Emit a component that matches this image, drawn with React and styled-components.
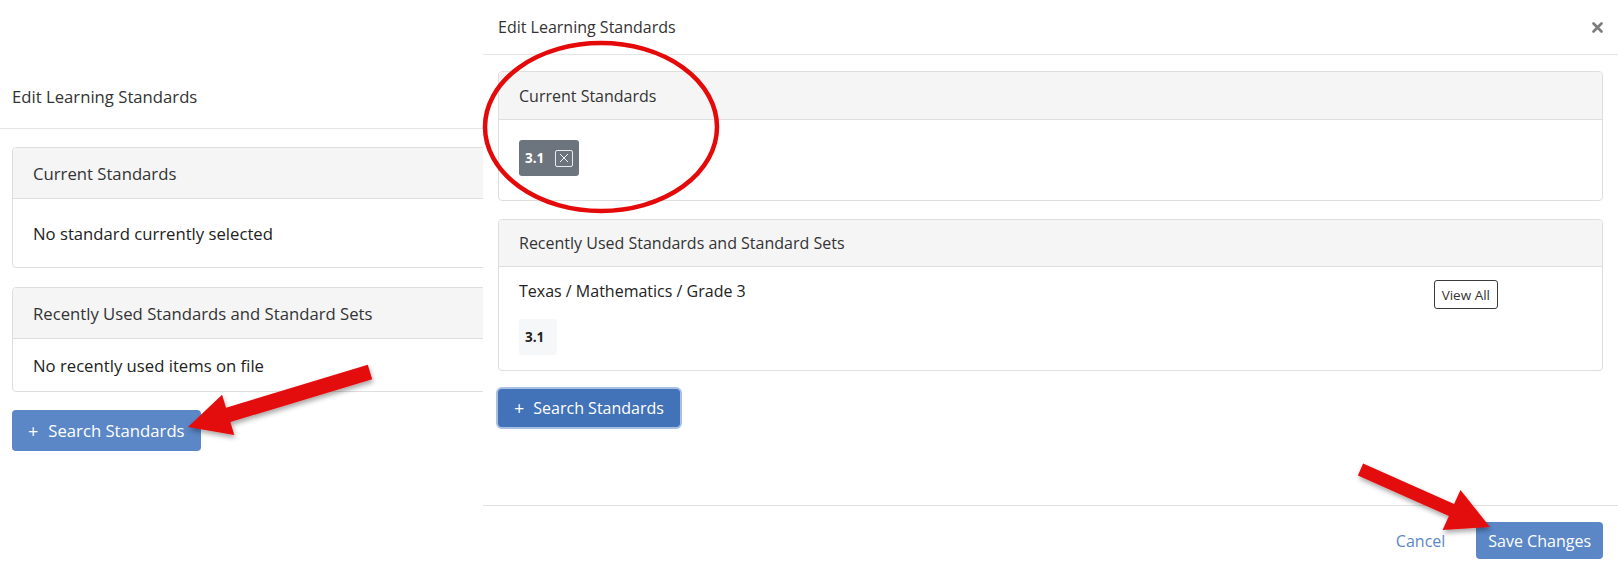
import React from 'react';
import styled, { createGlobalStyle } from 'styled-components';

const Global = createGlobalStyle`
  html, body { margin: 0; padding: 0; background: #fff; }
  * { box-sizing: border-box; }
`

const Page = styled.div`
  position: relative;
  width: 1618px;
  height: 575px;
  display: flex;
  overflow: hidden;
  background: #fff;
  font-family: "Open Sans", "Noto Sans", sans-serif;
  color: #333;
`

// left screenshot (slightly bigger scale)
const LeftPane = styled.div`
  flex: none;
  width: 483px;
  height: 100%;
  overflow: hidden;
`

const LeftInner = styled.div`
  width: 1100px;
`

const LeftHeader = styled.div`
  padding: 85px 12px 19px;
  border-bottom: 1px solid #e5e5e5;
  font-size: 16.7px;
  line-height: 24px;
  color: #333;
`

const LeftBody = styled.div`
  padding: 18px 12px 0;
  display: flex;
  flex-direction: column;
  gap: 19px;
`

const Card = styled.div`
  border: 1px solid #dedede;
  border-radius: 4px;
  background: #fff;
  overflow: hidden;
`

const CardHead = styled.div`
  height: ${p => p.$h}px;
  padding: 0 20px;
  display: flex;
  align-items: center;
  background: #f5f5f5;
  border-bottom: 1px solid #dedede;
  font-size: ${p => p.$fs}px;
  color: #333;
`

const EmptyBody = styled.div`
  height: ${p => p.$h}px;
  padding: 0 20px;
  display: flex;
  align-items: center;
  font-size: 16.7px;
  color: #222;
`

const ButtonRow = styled.div`
  display: flex;
  padding: 18px 12px 0;
`

const BlueButton = styled.button`
  align-self: ${p => p.$center ? 'center' : 'flex-start'};
  display: flex;
  align-items: center;
  gap: ${p => p.$gap}px;
  height: ${p => p.$h}px;
  padding: 0 ${p => p.$pad}px;
  border: none;
  border-radius: 4px;
  background: ${p => p.$bg};
  color: #fff;
  font-family: inherit;
  font-size: ${p => p.$fs}px;
  box-shadow: ${p => p.$focus ? '0 0 0 2px #a9c0e4' : 'none'};
`

const Plus = styled.span`
  font-size: 18px;
  font-weight: 400;
  line-height: 1;
`

// right screenshot (modal)
const RightPane = styled.div`
  flex: 1;
  height: 100%;
  display: flex;
  flex-direction: column;
  background: #fff;
`

const ModalHeader = styled.div`
  height: 55px;
  padding: 0 15px;
  display: flex;
  align-items: center;
  justify-content: space-between;
  border-bottom: 1px solid #e5e5e5;
  font-size: 16px;
  color: #333;
`

const CloseBtn = styled.span`
  display: flex;
  color: #7d7d7d;
`

const ModalBody = styled.div`
  flex: 1;
  padding: 16px 15px 0;
  display: flex;
  flex-direction: column;
  gap: 18px;
`

const TagBody = styled.div`
  height: 80px;
  padding: 20px 20px 0;
`

const Tag = styled.div`
  display: inline-flex;
  align-items: center;
  height: 36px;
  padding: 0 6px;
  gap: 11px;
  border-radius: 3px;
  background: #6c757d;
  color: #fff;
  font-size: 13.5px;
  font-weight: 700;
`

const TagX = styled.span`
  width: 18px;
  height: 17px;
  display: flex;
  align-items: center;
  justify-content: center;
  border: 1px solid rgba(255, 255, 255, 0.85);
  border-radius: 2px;
`

const RecentBody = styled.div`
  display: flex;
  justify-content: space-between;
  align-items: flex-start;
  padding: 13px 104px 15px 20px;
`

const RecentCol = styled.div`
  display: flex;
  flex-direction: column;
  gap: 17px;
`

const SetName = styled.div`
  font-size: 16px;
  line-height: 22px;
  color: #222;
`

const Chip = styled.div`
  align-self: flex-start;
  height: 36px;
  padding: 0 13px 0 6px;
  display: flex;
  align-items: center;
  background: #f6f7f8;
  border-radius: 3px;
  font-size: 13.5px;
  font-weight: 700;
  color: #222;
`

const OutlineBtn = styled.button`
  height: 29px;
  padding: 0 7px;
  border: 1px solid #3a3a3a;
  border-radius: 3px;
  background: #fff;
  font-family: inherit;
  font-size: 13.5px;
  color: #333;
`

const ModalFooter = styled.div`
  height: 70px;
  padding: 0 15px;
  display: flex;
  align-items: center;
  justify-content: flex-end;
  gap: 31px;
  border-top: 1px solid #e0e0e0;
`

const LinkBtn = styled.span`
  font-size: 16px;
  color: #5b87c7;
`

const Overlay = styled.svg`
  position: absolute;
  left: 0;
  top: 0;
  pointer-events: none;
`

const RED = '#e40a0a'

const App = () => {
  return (
    <Page>
      <Global />
      <LeftPane>
        <LeftInner>
          <LeftHeader>Edit Learning Standards</LeftHeader>
          <LeftBody>
            <Card>
              <CardHead $h={51} $fs={16.7}>Current Standards</CardHead>
              <EmptyBody $h={68}>No standard currently selected</EmptyBody>
            </Card>
            <Card>
              <CardHead $h={51} $fs={16.7}>Recently Used Standards and Standard Sets</CardHead>
              <EmptyBody $h={52}>No recently used items on file</EmptyBody>
            </Card>
          </LeftBody>
          <ButtonRow>
            <BlueButton $h={41} $pad={16} $gap={10} $fs={16.7} $bg="#5b87c7">
              <Plus>+</Plus> Search Standards
            </BlueButton>
          </ButtonRow>
        </LeftInner>
      </LeftPane>

      <RightPane>
        <ModalHeader>
          Edit Learning Standards
          <CloseBtn>
            <svg width="11" height="11" viewBox="0 0 11 11">
              <path d="M1.5 1.5 L9.5 9.5 M9.5 1.5 L1.5 9.5" stroke="currentColor" strokeWidth="2.6" strokeLinecap="round" />
            </svg>
          </CloseBtn>
        </ModalHeader>
        <ModalBody>
          <Card>
            <CardHead $h={48} $fs={16}>Current Standards</CardHead>
            <TagBody>
              <Tag>
                3.1
                <TagX>
                  <svg width="10" height="10" viewBox="0 0 10 10">
                    <path d="M1 1 L9 9 M9 1 L1 9" stroke="#fff" strokeWidth="0.9" />
                  </svg>
                </TagX>
              </Tag>
            </TagBody>
          </Card>
          <Card>
            <CardHead $h={47} $fs={16}>Recently Used Standards and Standard Sets</CardHead>
            <RecentBody>
              <RecentCol>
                <SetName>Texas / Mathematics / Grade 3</SetName>
                <Chip>3.1</Chip>
              </RecentCol>
              <OutlineBtn>View All</OutlineBtn>
            </RecentBody>
          </Card>
          <BlueButton $h={38} $pad={16} $gap={9} $fs={16} $bg="#4272b8" $focus>
            <Plus>+</Plus> Search Standards
          </BlueButton>
        </ModalBody>
        <ModalFooter>
          <LinkBtn>Cancel</LinkBtn>
          <BlueButton $center $h={37} $pad={12} $gap={0} $fs={16} $bg="#5b87c7">Save Changes</BlueButton>
        </ModalFooter>
      </RightPane>

      {/* red annotations drawn over the screenshots */}
      <Overlay width="1618" height="575" viewBox="0 0 1618 575">
        <defs>
          <filter id="shadow" x="-20%" y="-20%" width="140%" height="140%">
            <feDropShadow dx="1" dy="3" stdDeviation="2.5" floodColor="#000" floodOpacity="0.35" />
          </filter>
        </defs>
        <ellipse cx="601" cy="127" rx="116" ry="84" fill="none" stroke={RED} strokeWidth="4.5" />
        <polygon
          filter="url(#shadow)"
          fill={RED}
          points="372.2,379.2 230.4,422 234.3,435 188,427 222.1,394.8 226,407.7 367.8,364.8"
        />
        <polygon
          filter="url(#shadow)"
          fill={RED}
          points="1357.9,475.4 1448.9,515.9 1442.6,530.1 1489.9,527.1 1460.5,489.9 1454.1,504.1 1363.1,463.6"
        />
      </Overlay>
    </Page>
  );
};

export default App;
